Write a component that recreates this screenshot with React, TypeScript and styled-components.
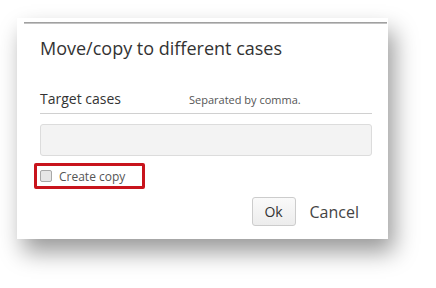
import styled, { createGlobalStyle } from "styled-components";

const GlobalStyle = createGlobalStyle`
  html, body {
    margin: 0;
    background: #ffffff;
  }
  body {
    font-family: "Open Sans", "Liberation Sans", sans-serif;
  }
`;

function App() {
  return (
    <Page>
      <GlobalStyle />
      <Dialog>
        <TopRule />
        <Title>Move/copy to different cases</Title>

        <FieldHeader>
          <FieldLabel>Target cases</FieldLabel>
          <FieldHint>Separated by comma.</FieldHint>
        </FieldHeader>

        <TextInput type="text" />

        <Highlight>
          <Checkbox type="checkbox" />
          <CheckLabel>Create copy</CheckLabel>
        </Highlight>

        <Actions>
          <Button type="button">Ok</Button>
          <LinkButton type="button">Cancel</LinkButton>
        </Actions>
      </Dialog>
    </Page>
  );
}

const Page = styled.div`
  width: 436px;
  height: 288px;
  padding: 18px 0 0 17px;
  box-sizing: border-box;
`;

const Dialog = styled.div`
  width: 371px;
  height: 221px;
  box-sizing: border-box;
  background: #ffffff;
  padding: 4px 16px 13px 23px;
  display: flex;
  flex-direction: column;
  box-shadow: 6px 13px 22px rgba(0, 0, 0, 0.4);
`;

const TopRule = styled.div`
  height: 2px;
  margin: 0 -15px 0 -16px;
  background: linear-gradient(#8f8f8f, #d4d4d4);
`;

const Title = styled.h2`
  margin: 12px 0 0;
  font-size: 18px;
  line-height: 24px;
  font-weight: 400;
  color: #333333;
`;

const FieldHeader = styled.div`
  display: flex;
  align-items: baseline;
  margin-top: 29px;
  padding-bottom: 4px;
  border-bottom: 1px solid #d0d0d0;
`;

const FieldLabel = styled.label`
  width: 149px;
  font-size: 14px;
  line-height: 20px;
  color: #333333;
`;

const FieldHint = styled.span`
  font-size: 11px;
  color: #555555;
`;

const TextInput = styled.input`
  margin-top: 10px;
  height: 32px;
  box-sizing: border-box;
  border: 1px solid #dcdcdc;
  border-radius: 3px;
  background: #f3f3f3;
  outline: none;
`;

const Highlight = styled.label`
  align-self: flex-start;
  display: flex;
  align-items: center;
  gap: 7px;
  margin: 7px 0 0 -6px;
  width: 111px;
  height: 26px;
  box-sizing: border-box;
  padding: 0 0 0 3px;
  border: 3px solid #c8141c;
  border-radius: 2px;
`;

const Checkbox = styled.input`
  appearance: none;
  margin: 0;
  width: 12px;
  height: 12px;
  border: 1px solid #a8a8a8;
  border-radius: 2px;
  background: #e6e6e6;
`;

const CheckLabel = styled.span`
  font-size: 12px;
  color: #555555;
`;

const Actions = styled.div`
  display: flex;
  justify-content: flex-end;
  align-items: center;
  gap: 14px;
  margin-top: 8px;
  padding-right: 13px;
`;

const Button = styled.button`
  width: 44px;
  height: 29px;
  border: 1px solid #cccccc;
  border-radius: 3px;
  background: linear-gradient(#fafafa, #ececec);
  font-family: inherit;
  font-size: 14px;
  color: #333333;
  padding: 0;
`;

const LinkButton = styled.button`
  border: none;
  background: none;
  padding: 0;
  font-family: inherit;
  font-size: 16px;
  color: #444444;
`;

export default App;
